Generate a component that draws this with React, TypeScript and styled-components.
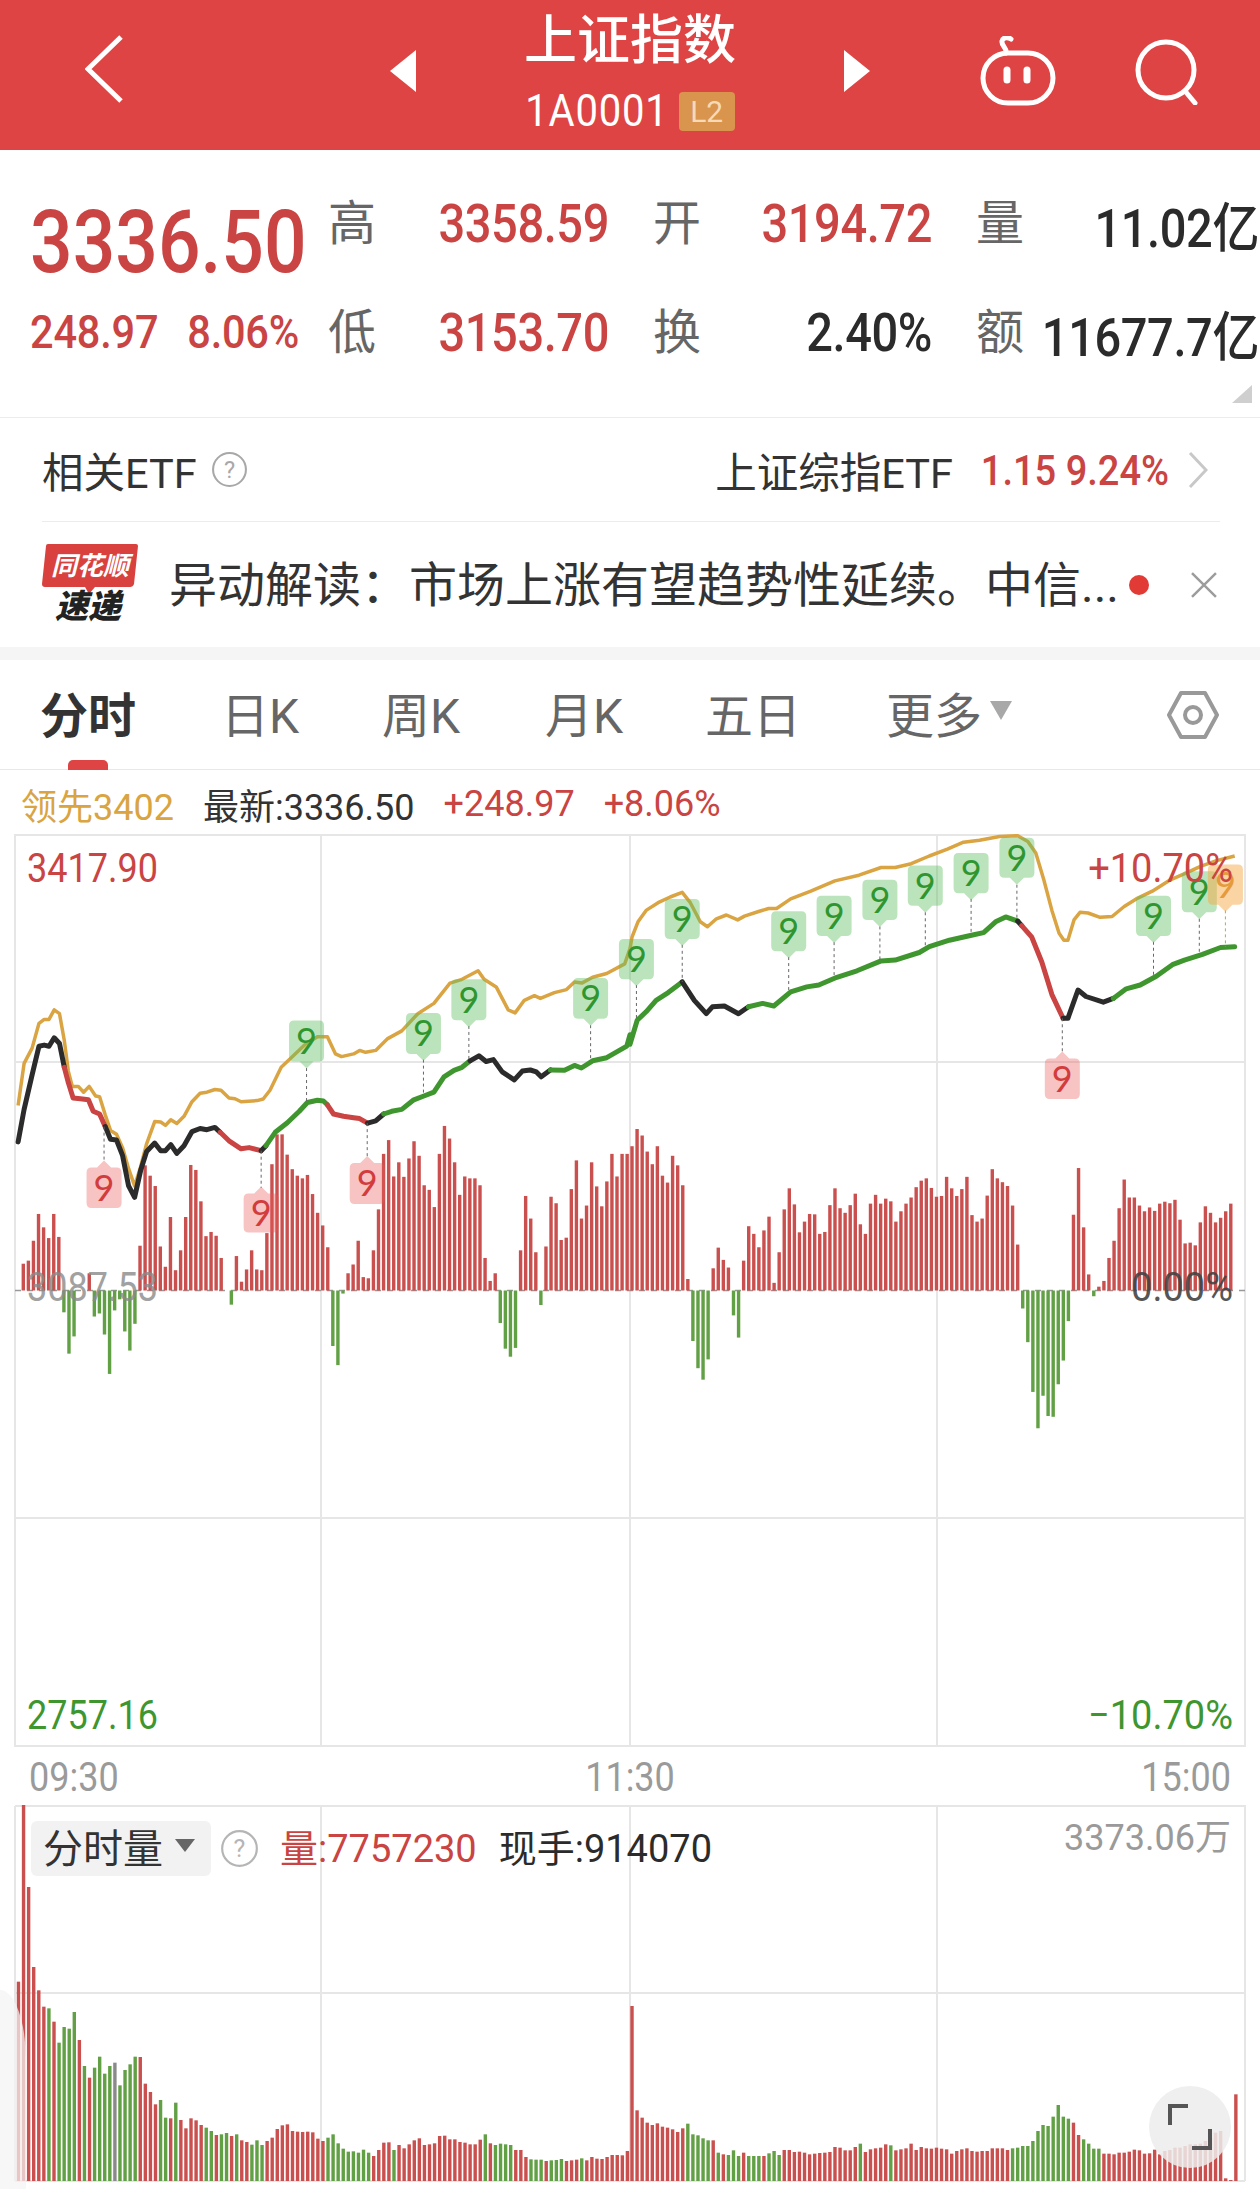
import React from "react";
import styled, { createGlobalStyle } from "styled-components";

const RED = "#c94442";
const GREEN = "#3f962f";
const GOLD = "#d9a441";
const DARK = "#2b2b2b";
const GRID = "#e6e6e6";

const GlobalStyle = createGlobalStyle`
  html, body {
    margin: 0;
    padding: 0;
    background: #fff;
  }
  * {
    box-sizing: border-box;
  }
  body {
    font-family: "Roboto", "Noto Sans CJK SC", sans-serif;
    color: ${DARK};
  }
`;

const Page = styled.div`
  position: relative;
  width: 1260px;
  height: 2189px;
  overflow: hidden;
  background: #fff;
`;

const Num = styled.span<{ $s?: number }>`
  display: inline-block;
  transform: scaleY(${(p) => p.$s || 1.14});
`;

/* top bar */
const Header = styled.header`
  height: 150px;
  background: #de4443;
  display: flex;
  align-items: flex-start;
  padding-left: 85px;
  color: #fff;
`;

const IconSlot = styled.div<{ $ml: number; $mt: number }>`
  margin-left: ${(p) => p.$ml}px;
  margin-top: ${(p) => p.$mt}px;
  line-height: 0;
`;

const TitleBlock = styled.div`
  width: 428px;
  display: flex;
  flex-direction: column;
  align-items: center;
`;

const Title = styled.h1`
  margin: 11px 0 0;
  font-size: 53px;
  line-height: 60px;
  font-weight: 500;
  white-space: nowrap;
`;

const CodeRow = styled.div`
  margin-top: 20px;
  display: flex;
  align-items: center;
  gap: 10px;
  font-size: 40px;
  line-height: 40px;
  letter-spacing: 0.8px;
`;

const Badge = styled.span`
  width: 56px;
  height: 39px;
  border-radius: 4px;
  background: #d9944e;
  color: #f6dab6;
  font-size: 30px;
  line-height: 39px;
  text-align: center;
  letter-spacing: 0;
`;

/* quote block */
const Stats = styled.section`
  position: relative;
  height: 268px;
  display: flex;
  border-bottom: 1px solid #ececec;
`;

const PriceCol = styled.div`
  width: 328px;
  padding: 52px 0 0 30px;
`;

const Price = styled.div`
  font-size: 75px;
  line-height: 80px;
  font-weight: 500;
  color: ${RED};
`;

const Change = styled.div`
  margin-top: 31px;
  display: flex;
  gap: 29px;
  font-size: 41.5px;
  line-height: 40px;
  font-weight: 500;
  letter-spacing: -0.2px;
  color: ${RED};
`;

const StatGrid = styled.div`
  padding-top: 43px;
  display: grid;
  grid-template-columns: 281px 279px 283px;
  grid-auto-rows: 60px;
  column-gap: 44px;
  row-gap: 49px;
  align-content: start;
`;

const Stat = styled.div`
  display: flex;
  align-items: center;
  justify-content: space-between;
  white-space: nowrap;
`;

const StatLabel = styled.span`
  margin-top: -8px;
  font-size: 48px;
  color: #666;
`;

const StatValue = styled.span<{ $up?: boolean }>`
  font-size: 47px;
  font-weight: 500;
  letter-spacing: -0.4px;
  color: ${(p) => (p.$up ? RED : DARK)};
`;

const Corner = styled.div`
  position: absolute;
  right: 8px;
  bottom: 14px;
  width: 0;
  height: 0;
  border-left: 20px solid transparent;
  border-bottom: 18px solid #cfcfcf;
`;

/* ETF row */
const EtfRow = styled.div`
  margin: 0 40px 0 42px;
  height: 104px;
  padding-right: 12px;
  display: flex;
  align-items: center;
  justify-content: space-between;
  border-bottom: 1px solid #ececec;
  white-space: nowrap;
`;

const EtfSide = styled.div<{ $gap: number }>`
  display: flex;
  align-items: center;
  gap: ${(p) => p.$gap}px;
`;

const EtfName = styled.span`
  font-size: 41.5px;
  color: #333;
`;

const EtfQuote = styled.span`
  font-size: 38px;
  font-weight: 500;
  color: ${RED};
`;

const ChevronSvg = styled.svg`
  margin-left: -9px;
`;

/* news row */
const NewsRow = styled.div`
  height: 125px;
  padding: 0 42px;
  display: flex;
  align-items: center;
  white-space: nowrap;
`;

const LogoSvg = styled.svg`
  margin-top: 7px;
  flex: none;
`;

const NewsText = styled.span`
  width: 957px;
  margin: 0 0 7px 31px;
  font-size: 48px;
  color: #333;
`;

const Dot = styled.span`
  margin-left: 5px;
  width: 20px;
  height: 20px;
  border-radius: 50%;
  background: #e23a35;
`;

const CloseSvg = styled.svg`
  margin-left: 41px;
`;

const Band = styled.div`
  height: 13px;
  background: #f5f5f5;
`;

/* tabs */
const Tabs = styled.nav`
  height: 110px;
  padding: 0 41px 0 40px;
  display: grid;
  grid-template-columns: 181px 161px 163px 160px 181px 1fr auto;
  align-items: center;
  border-bottom: 1px solid #e8e8e8;
`;

const Tab = styled.div<{ $active?: boolean }>`
  position: relative;
  height: 110px;
  display: flex;
  align-items: center;
  gap: 8px;
  padding-bottom: 6px;
  font-size: 48px;
  white-space: nowrap;
  font-weight: ${(p) => (p.$active ? 700 : 400)};
  color: ${(p) => (p.$active ? "#333" : "#666")};
`;

const TabMark = styled.span`
  position: absolute;
  left: 28px;
  bottom: 0;
  width: 40px;
  height: 10px;
  border-radius: 5px 5px 0 0;
  background: #de4443;
`;

const TabArrow = styled.span`
  width: 0;
  height: 0;
  border-left: 11px solid transparent;
  border-right: 11px solid transparent;
  border-top: 19px solid #a8a8a8;
  margin-bottom: 4px;
`;

const SettingsSlot = styled.div`
  justify-self: end;
  line-height: 0;
`;

/* info row */
const InfoRow = styled.div`
  height: 64px;
  padding: 4px 0 0 21px;
  display: flex;
  align-items: center;
  gap: 29px;
  font-size: 36px;
  white-space: nowrap;
`;

const InfoItem = styled.span<{ $color: string }>`
  color: ${(p) => p.$color};
`;

/* charts */
const ChartPanel = styled.div<{ $h: number }>`
  position: relative;
  margin-left: 14px;
  width: 1232px;
  height: ${(p) => p.$h}px;
`;

const ChartSvg = styled.svg`
  display: block;
  width: 100%;
  height: 100%;
`;

const AxisLabel = styled.span<{ $color: string; $side: "left" | "right"; $top: number; $o?: number; $fs?: number }>`
  position: absolute;
  ${(p) => p.$side}: 13px;
  top: ${(p) => p.$top}px;
  font-size: ${(p) => p.$fs || 38}px;
  line-height: 44px;
  color: ${(p) => p.$color};
  opacity: ${(p) => p.$o ?? 1};
  white-space: nowrap;
`;

const TimeRow = styled.div`
  height: 58px;
  padding: 2px 29px 0;
  display: flex;
  align-items: center;
  justify-content: space-between;
  font-size: 36px;
  color: #9a9a9a;
`;

const VolBar = styled.div`
  position: absolute;
  left: 17px;
  top: 13px;
  display: flex;
  align-items: center;
  white-space: nowrap;
`;

const VolSelect = styled.div`
  width: 180px;
  height: 55px;
  margin-right: 9px;
  padding: 0 0 5px 12px;
  display: flex;
  align-items: center;
  gap: 12px;
  border-radius: 6px;
  background: rgba(241, 241, 241, 0.95);
  font-size: 40px;
  color: #333;
`;

const SelectArrow = styled.span`
  width: 0;
  height: 0;
  border-left: 10px solid transparent;
  border-right: 10px solid transparent;
  border-top: 13px solid #666;
`;

const VolValue = styled.span<{ $color: string; $ml: number }>`
  margin-left: ${(p) => p.$ml}px;
  margin-bottom: 5px;
  font-size: 38px;
  color: ${(p) => p.$color};
`;

const MaxVol = styled.span`
  position: absolute;
  right: 15px;
  top: 9px;
  font-size: 36px;
  line-height: 48px;
  color: #9a9a9a;
`;

const FullBtn = styled.div`
  position: absolute;
  right: 15px;
  bottom: 15px;
  width: 82px;
  height: 82px;
  border-radius: 50%;
  background: rgba(236, 236, 236, 0.85);
  display: flex;
  align-items: center;
  justify-content: center;
`;

const SideTab = styled.div`
  position: absolute;
  left: 0;
  bottom: 0;
  width: 26px;
  height: 199px;
  border-top-right-radius: 26px 70px;
  background: rgba(244, 244, 244, 0.72);
  pointer-events: none;
`;

// coordinates below are read off the reference, two half-width columns
const lx = (x: number) => x / 2.489;
const rx = (x: number) => 630 + x / 2.489;
const my = (y: number) => 830 + y / 2.613;

type Pts = number[];
const pl = (toX: (n: number) => number, pts: Pts) => {
  const out: string[] = [];
  for (let i = 0; i < pts.length; i += 2) {
    out.push(`${toX(pts[i]).toFixed(1)},${my(pts[i + 1]).toFixed(1)}`);
  }
  return out.join(" ");
};

const goldL: Pts = [45,720,60,610,80,570,97,505,110,495,122,495,135,470,148,480,160,550,170,630,180,670,195,670,208,685,222,670,238,695,248,697,262,745,275,785,290,795,305,830,320,885,335,930,350,880,365,820,385,762,400,763,412,772,425,757,440,767,458,748,478,710,498,688,515,685,535,678,550,680,570,700,585,702,600,710,640,707,655,703,672,680,700,620,730,590,760,560,790,540,815,540,835,585,850,592,880,585,895,576,910,581,935,576,965,545,1000,525,1040,480,1080,453,1120,400,1150,390,1190,368,1205,390,1235,410,1265,470,1282,478,1305,445,1330,433,1345,440,1380,425,1410,417,1430,397,1448,400,1475,385,1510,375,1555,350,1568,310];
const goldR: Pts = [0,310,5,280,20,240,40,210,70,190,100,175,130,163,150,190,175,240,193,253,215,232,240,222,268,235,285,225,320,213,345,205,365,205,400,180,450,160,510,133,570,118,625,98,660,98,700,88,745,68,790,50,830,32,870,27,920,17,965,15,990,30,1010,60,1030,130,1050,210,1068,270,1080,288,1090,288,1105,235,1120,215,1140,217,1170,228,1200,226,1230,200,1260,180,1300,160,1345,130,1385,112,1420,95,1460,80,1505,68];

const segL: [string, Pts][] = [
  [DARK, [45,815,60,730,80,640,97,565,110,562,122,565,135,543,148,558,160,620]],
  [RED, [160,620,170,660,182,700,200,702,220,705,232,735,248,742,262,775]],
  [DARK, [262,775,275,808,290,810,305,850,320,930,335,960,350,890,365,840,385,818,400,838,412,838,425,822,440,845,458,825,478,788,498,780,515,783,535,777,548,790]],
  [RED, [548,790,570,812,600,833,620,830,650,838]],
  [DARK, [650,838,662,825]],
  [GREEN, [662,825,685,790,715,765,745,735,765,712,790,706,805,708,815,718]],
  [RED, [815,718,830,742,855,748,880,752,895,754,915,766]],
  [DARK, [915,766,935,760,955,742]],
  [GREEN, [955,742,975,735,1000,730,1030,705,1055,695,1080,685,1105,645,1130,628,1150,620,1170,603]],
  [DARK, [1170,603,1192,590,1210,605,1228,600,1250,632,1280,653,1300,630,1320,627,1335,632,1347,645,1370,627]],
  [GREEN, [1370,627,1405,628,1430,615,1447,622,1475,603,1510,595,1560,565,1568,535]],
];
const segR: [string, Pts][] = [
  [GREEN, [0,560,18,497,40,475,65,445,95,425,130,397]],
  [DARK, [130,397,160,445,190,480,205,462,235,460,270,480,295,462]],
  [GREEN, [295,462,330,453,358,460,400,423,440,410,470,405,515,385,565,368,625,342,660,340,720,320,745,305,795,288,850,275,880,268,910,240,935,227,965,238]],
  [DARK, [965,238,975,250]],
  [RED, [975,250,1000,280,1025,345,1050,430,1078,492]],
  [DARK, [1078,492,1090,492,1115,418,1135,435,1178,450,1203,440]],
  [GREEN, [1203,440,1235,415,1270,405,1310,382,1350,352,1380,340,1425,325,1470,307,1505,305]],
];

type Kind = "g" | "r" | "o";
// x, box top, box bottom, dash from, dash to (crop units)
const tags: [number, number, number, Kind, number, number][] = [
  [lx(259), 882, 988, "r", 775, 865],
  [lx(650), 950, 1052, "r", 838, 935],
  [lx(763), 498, 605, "g", 622, 712],
  [lx(914), 870, 977, "r", 766, 855],
  [lx(1054), 478, 585, "g", 600, 695],
  [lx(1167), 390, 497, "g", 512, 603],
  [lx(1470), 387, 493, "g", 510, 600],
  [rx(16), 285, 390, "g", 405, 497],
  [rx(130), 180, 285, "g", 300, 397],
  [rx(395), 212, 317, "g", 332, 423],
  [rx(508), 172, 277, "g", 293, 385],
  [rx(622), 130, 235, "g", 252, 342],
  [rx(735), 93, 198, "g", 215, 308],
  [rx(849), 60, 165, "g", 180, 275],
  [rx(963), 20, 125, "g", 143, 235],
  [rx(1076), 597, 703, "r", 492, 580],
  [rx(1303), 172, 277, "g", 292, 382],
  [rx(1417), 108, 215, "g", 232, 325],
  [rx(1482), 90, 195, "o", 210, 305],
];

const tagStyle: Record<Kind, { fill: string; text: string; dash: string }> = {
  g: { fill: "rgba(96,190,96,0.42)", text: "#2f962f", dash: "#666" },
  r: { fill: "rgba(232,90,90,0.36)", text: "#d23c3c", dash: "#666" },
  o: { fill: "rgba(246,170,70,0.5)", text: "#e59a3c", dash: "#c9a24a" },
};

const oscL = [70,78,130,200,165,137,200,140,-57,-165,-120,0,0,45,-68,-60,-115,-218,-52,-23,-107,-157,-87,117,327,300,273,115,62,192,53,105,192,328,315,233,142,153,143,85,0,-37,90,23,55,105,55,53,150,330,408,408,355,317,300,293,302,252,203,170,113,-145,-195,-8,45,68,130,35,32,105,212,357,393,298,335,297,345,390,352,275,263,218,357,430,397,335,250,298,293,293,275,85,25,45,-85,-152,-173,-150,105,247,188,100,-38,115,245,228,132,138,265,340,188,222,335,272,220,285,357,298,357,357];
const oscR = [377,422,405,363,330,377,300,282,352,327,275,30,-132,-203,-233,-180,58,112,80,60,-65,-123,78,168,148,113,157,193,20,100,212,267,225,152,180,200,199,148,153,223,267,215,203,223,253,173,148,227,250,227,240,233,180,207,227,243,270,287,293,268,245,247,297,267,247,265,297,197,180,188,248,317,293,283,273,222,120,-47,-135,-265,-360,-275,-328,-330,-245,-183,-80,198,320,165,42,-15,10,25,85,130,215,290,243,243,222,207,217,208,227,232,228,237,185,123,125,118,178,220,203,178,190,207,227];

// top of each volume bar in crop units, negative = green
const volL = [842,312,558,798,868,917,-922,962,-1025,-978,-983,-933,1017,-1095,1130,-1100,-1067,-1118,-1095,-1085,-1153,-1107,-1090,-1067,1068,1148,1173,1210,-1197,-1250,1252,-1205,1257,1282,1252,1258,1272,-1280,-1290,1302,-1300,-1296,1305,-1300,1318,1323,-1331,-1318,-1332,1320,1310,1284,1273,1270,1290,1292,1293,1292,1294,1313,1320,-1310,-1300,-1327,-1343,-1352,-1351,-1355,-1346,-1355,1365,1347,1325,1324,-1347,1332,1342,1330,1318,1312,1332,1330,1327,1305,1304,1315,1315,1323,1325,1330,1330,1316,-1300,1327,-1332,-1328,-1330,-1332,1347,1347,1368,-1375,-1376,-1376,1380,-1378,-1377,-1374,1380,1378,1376,-1372,1378,1368,1373,1374,1368,1362,1362,1363,1350];
const volR = [915,1228,1250,1265,1272,1267,1277,1280,1285,1293,1282,-1268,-1300,-1303,-1312,-1318,1318,-1355,1360,-1362,-1348,-1365,1355,-1365,-1365,-1365,1365,-1357,-1350,-1362,1347,1347,1353,1352,1355,1360,1358,1356,1355,1353,1338,1340,1348,1348,1338,-1328,1353,1345,1342,1340,1330,-1333,1348,1345,1342,1328,1347,1338,1342,1343,1340,1343,1345,1358,1350,1345,1342,1350,1352,1350,1350,1342,1342,1342,1347,-1342,-1340,-1335,-1335,-1320,-1290,-1272,-1275,-1247,-1212,-1247,-1253,1265,1302,-1315,-1328,-1343,-1343,1358,1358,1360,1355,1355,1352,1346,1348,1358,1357,1346,1360,1350,1347,1340,1340,1335,1330,1330,1328,1320,1310,1295,1290,1432,1437,1180];

const BAR_RED = "#c9504e";
const BAR_GREEN = "#62a045";
const ZERO = 1290.5;
const BAR_W = 3.4;

function PriceChart() {
  const bars: React.ReactNode[] = [];
  const push = (x: number, v: number, key: string) => {
    const h = Math.abs(v) / 2.613;
    bars.push(
      <rect key={key} x={x - BAR_W / 2} y={v > 0 ? ZERO - h : ZERO} width={BAR_W} height={h} fill={v > 0 ? BAR_RED : BAR_GREEN} />
    );
  };
  oscL.forEach((v, i) => push(lx(58 + 12.63 * i), v, "l" + i));
  oscR.forEach((v, i) => push(rx(5 + 12.63 * i), v, "r" + i));

  return (
    <ChartSvg viewBox="14 834 1232 913">
      <g stroke={GRID} strokeWidth="2" fill="none">
        <rect x="15" y="835" width="1230" height="911" />
        <path d="M321 835V1746M630 835V1746M937 835V1746M15 1062H1245M15 1518H1245" />
      </g>
      <path d="M15 1290.5H1245" stroke="#999" strokeWidth="1.5" strokeDasharray="6 6" />
      {bars}
      <polyline points={pl(lx, goldL)} fill="none" stroke={GOLD} strokeWidth="3.5" strokeLinejoin="round" />
      <polyline points={pl(rx, goldR)} fill="none" stroke={GOLD} strokeWidth="3.5" strokeLinejoin="round" />
      {segL.map(([c, p], i) => (
        <polyline key={i} points={pl(lx, p)} fill="none" stroke={c} strokeWidth="5" strokeLinejoin="round" strokeLinecap="round" />
      ))}
      {segR.map(([c, p], i) => (
        <polyline key={i} points={pl(rx, p)} fill="none" stroke={c} strokeWidth="5" strokeLinejoin="round" strokeLinecap="round" />
      ))}
      {tags.map(([x, t, b, kind, d0, d1], i) => {
        const st = tagStyle[kind];
        const top = my(t);
        const bottom = my(b);
        const hw = 17.5;
        const up = d1 < t;
        const tip = up ? top - 7 : bottom + 7;
        const d = up
          ? `M${x - hw + 5} ${top}H${x - 7}L${x} ${tip}L${x + 7} ${top}H${x + hw - 5}Q${x + hw} ${top} ${x + hw} ${top + 5}V${bottom - 5}Q${x + hw} ${bottom} ${x + hw - 5} ${bottom}H${x - hw + 5}Q${x - hw} ${bottom} ${x - hw} ${bottom - 5}V${top + 5}Q${x - hw} ${top} ${x - hw + 5} ${top}Z`
          : `M${x - hw + 5} ${top}H${x + hw - 5}Q${x + hw} ${top} ${x + hw} ${top + 5}V${bottom - 5}Q${x + hw} ${bottom} ${x + hw - 5} ${bottom}H${x + 7}L${x} ${tip}L${x - 7} ${bottom}H${x - hw + 5}Q${x - hw} ${bottom} ${x - hw} ${bottom - 5}V${top + 5}Q${x - hw} ${top} ${x - hw + 5} ${top}Z`;
        return (
          <g key={i}>
            <path d={`M${x} ${my(d0)}V${my(d1)}`} stroke={st.dash} strokeWidth="1" strokeDasharray="3 3" />
            <path d={d} fill={st.fill} />
            <text x={x} y={(top + bottom) / 2 + 13} textAnchor="middle" fontFamily="Lato, sans-serif" fontSize="36" fill={st.text}>
              9
            </text>
          </g>
        );
      })}
    </ChartSvg>
  );
}

function VolumeChart() {
  const bars: React.ReactNode[] = [];
  const push = (x: number, v: number, key: string, gray?: boolean) => {
    const top = 1700 + Math.abs(v) / 3;
    const fill = gray ? "#8a8a8a" : v > 0 ? BAR_RED : BAR_GREEN;
    bars.push(<rect key={key} x={x - BAR_W / 2} y={top} width={BAR_W} height={2180 - top} fill={fill} />);
  };
  volL.forEach((v, i) => push(lx(46 + 12.63 * i), v, "l" + i, i === 19));
  volR.forEach((v, i) => push(rx(5 + 12.63 * i), v, "r" + i));

  return (
    <ChartSvg viewBox="14 1804 1232 378">
      <g stroke={GRID} strokeWidth="2" fill="none">
        <path d="M15 1805H1245V2180M15 1805V2180M321 1805V2180M630 1805V2180M937 1805V2180M15 1992H1245M15 2180H1245" />
      </g>
      {bars}
    </ChartSvg>
  );
}

const HelpIcon = ({ size, color }: { size: number; color: string }) => (
  <svg width={size} height={size} viewBox="0 0 36 36" fill="none">
    <circle cx="18" cy="18" r="16" stroke={color} strokeWidth="2" />
    <text x="18" y="26" textAnchor="middle" fontFamily="Roboto, sans-serif" fontSize="23" fill={color}>
      ?
    </text>
  </svg>
);

const NewsLogo = () => (
  <LogoSvg width="96" height="92" viewBox="0 0 96 92">
    <path d="M6 2H94Q96 2 96 4L92 42Q91 45 88 45H53L47 52L43 45H3Q0 45 0 42L4 4Q4 2 6 2Z" fill="#d8413d" />
    <text x="48" y="33" textAnchor="middle" fontFamily="'Noto Sans CJK SC', sans-serif" fontSize="26" fontWeight="700" fontStyle="italic" fill="#fff">
      同花顺
    </text>
    <text x="46" y="76" textAnchor="middle" fontFamily="'Noto Sans CJK SC', sans-serif" fontSize="33" fontWeight="900" fontStyle="italic" fill="#222">
      速递
    </text>
  </LogoSvg>
);

export default function App() {
  return (
    <Page>
      <GlobalStyle />
      <Header>
        <IconSlot $ml={0} $mt={35}>
          <svg width="38" height="68" viewBox="0 0 38 68" fill="none">
            <path d="M36 2L3 34L36 66" stroke="#fff" strokeWidth="5" />
          </svg>
        </IconSlot>
        <IconSlot $ml={267} $mt={50}>
          <svg width="26" height="42" viewBox="0 0 26 42">
            <path d="M26 0V42L0 21Z" fill="#fff" />
          </svg>
        </IconSlot>
        <TitleBlock>
          <Title>上证指数</Title>
          <CodeRow>
            <Num $s={1.12}>1A0001</Num>
            <Badge>L2</Badge>
          </CodeRow>
        </TitleBlock>
        <IconSlot $ml={0} $mt={50}>
          <svg width="26" height="42" viewBox="0 0 26 42">
            <path d="M0 0V42L26 21Z" fill="#fff" />
          </svg>
        </IconSlot>
        <IconSlot $ml={110} $mt={36}>
          <svg width="76" height="70" viewBox="0 0 76 70" fill="none" stroke="#fff" strokeWidth="5">
            <path d="M26 17C27 11 21 10 22 5C23 1 28 1 31 3" strokeLinecap="round" />
            <rect x="3" y="17" width="70" height="50" rx="25" />
            <path d="M27 34V44M47 34V44" strokeWidth="7" strokeLinecap="round" />
          </svg>
        </IconSlot>
        <IconSlot $ml={79} $mt={39}>
          <svg width="66" height="66" viewBox="0 0 66 66" fill="none" stroke="#fff" strokeWidth="5">
            <circle cx="31" cy="31" r="28" />
            <path d="M50 52L60 64" strokeLinecap="round" />
          </svg>
        </IconSlot>
      </Header>

      <Stats>
        <PriceCol>
          <Price>
            <Num $s={1.16}>3336.50</Num>
          </Price>
          <Change>
            <Num $s={1.1}>248.97</Num>
            <Num $s={1.1}>8.06%</Num>
          </Change>
        </PriceCol>
        <StatGrid>
          <Stat>
            <StatLabel>高</StatLabel>
            <StatValue $up>
              <Num>3358.59</Num>
            </StatValue>
          </Stat>
          <Stat>
            <StatLabel>开</StatLabel>
            <StatValue $up>
              <Num>3194.72</Num>
            </StatValue>
          </Stat>
          <Stat>
            <StatLabel>量</StatLabel>
            <StatValue>
              <Num>11.02亿</Num>
            </StatValue>
          </Stat>
          <Stat>
            <StatLabel>低</StatLabel>
            <StatValue $up>
              <Num>3153.70</Num>
            </StatValue>
          </Stat>
          <Stat>
            <StatLabel>换</StatLabel>
            <StatValue>
              <Num>2.40%</Num>
            </StatValue>
          </Stat>
          <Stat>
            <StatLabel>额</StatLabel>
            <StatValue>
              <Num>11677.7亿</Num>
            </StatValue>
          </Stat>
        </StatGrid>
        <Corner />
      </Stats>

      <EtfRow>
        <EtfSide $gap={14}>
          <EtfName>相关ETF</EtfName>
          <HelpIcon size={37} color="#a8a8a8" />
        </EtfSide>
        <EtfSide $gap={28}>
          <EtfName>上证综指ETF</EtfName>
          <EtfQuote>
            <Num>1.15 9.24%</Num>
          </EtfQuote>
          <ChevronSvg width="20" height="38" viewBox="0 0 20 38" fill="none">
            <path d="M2 2L18 19L2 36" stroke="#c8c8c8" strokeWidth="3" />
          </ChevronSvg>
        </EtfSide>
      </EtfRow>

      <NewsRow>
        <NewsLogo />
        <NewsText>异动解读：市场上涨有望趋势性延续。中信...</NewsText>
        <Dot />
        <CloseSvg width="28" height="26" viewBox="0 0 28 26" fill="none">
          <path d="M2 1L26 25M26 1L2 25" stroke="#9c9c9c" strokeWidth="2.5" />
        </CloseSvg>
      </NewsRow>
      <Band />

      <Tabs>
        <Tab $active>
          分时
          <TabMark />
        </Tab>
        <Tab>日K</Tab>
        <Tab>周K</Tab>
        <Tab>月K</Tab>
        <Tab>五日</Tab>
        <Tab>
          更多
          <TabArrow />
        </Tab>
        <SettingsSlot>
          <svg width="52" height="50" viewBox="0 0 52 50" fill="none" stroke="#999" strokeWidth="4">
            <path d="M14 3H38L50 25L38 47H14L2 25Z" strokeLinejoin="round" />
            <circle cx="26" cy="25" r="8" />
          </svg>
        </SettingsSlot>
      </Tabs>

      <InfoRow>
        <InfoItem $color={GOLD}>领先3402</InfoItem>
        <InfoItem $color="#333">最新:3336.50</InfoItem>
        <InfoItem $color={RED}>+248.97</InfoItem>
        <InfoItem $color={RED}>+8.06%</InfoItem>
      </InfoRow>

      <ChartPanel $h={913}>
        <PriceChart />
        <AxisLabel $color={RED} $side="left" $top={12} $fs={36}><Num>3417.90</Num></AxisLabel>
        <AxisLabel $color={RED} $side="right" $top={12}><Num $s={1.08}>+10.70%</Num></AxisLabel>
        <AxisLabel $color="#8a8a8a" $side="left" $top={431} $o={0.8} $fs={36}><Num>3087.53</Num></AxisLabel>
        <AxisLabel $color="#444" $side="right" $top={431} $o={0.9}><Num $s={1.08}>0.00%</Num></AxisLabel>
        <AxisLabel $color={GREEN} $side="left" $top={859} $fs={36}><Num>2757.16</Num></AxisLabel>
        <AxisLabel $color={GREEN} $side="right" $top={859}><Num $s={1.08}>−10.70%</Num></AxisLabel>
      </ChartPanel>

      <TimeRow>
        <Num>09:30</Num>
        <Num>11:30</Num>
        <Num>15:00</Num>
      </TimeRow>

      <ChartPanel $h={378}>
        <VolumeChart />
        <VolBar>
          <VolSelect>
            分时量
            <SelectArrow />
          </VolSelect>
          <HelpIcon size={39} color="#b5b5b5" />
          <VolValue $color={RED} $ml={21}>量:7757230</VolValue>
          <VolValue $color={DARK} $ml={22}>现手:914070</VolValue>
        </VolBar>
        <MaxVol>3373.06万</MaxVol>
        <FullBtn>
          <svg width="44" height="48" viewBox="0 0 44 48" fill="none" stroke="#555" strokeWidth="4">
            <path d="M2 22V3H20M42 26V45H24" />
          </svg>
        </FullBtn>
      </ChartPanel>
      <SideTab />
    </Page>
  );
}
